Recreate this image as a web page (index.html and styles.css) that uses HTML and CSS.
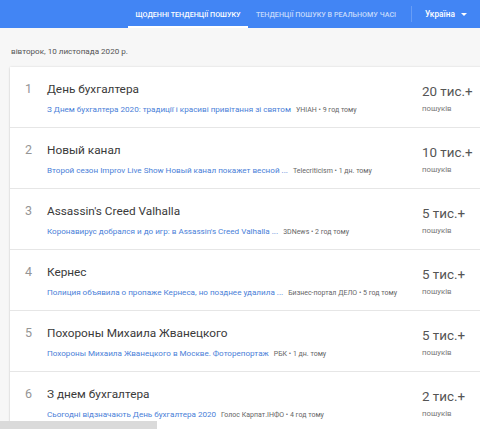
FILE: index.html
```html
<!DOCTYPE html>
<html lang="uk">
<head>
<meta charset="utf-8">
<title>Тенденції пошуку</title>
<link rel="stylesheet" href="styles.css">
</head>
<body>
<header class="topbar">
  <nav class="tabs">
    <a class="tab tab-active">ЩОДЕННІ ТЕНДЕНЦІЇ ПОШУКУ</a>
    <a class="tab">ТЕНДЕНЦІЇ ПОШУКУ В РЕАЛЬНОМУ ЧАСІ</a>
  </nav>
  <div class="divider"></div>
  <div class="geo">Україна <span class="caret"></span></div>
</header>
<main class="content">
  <div class="date">вівторок, 10 листопада 2020 р.</div>
  <section class="card">
    <div class="row">
      <div class="num">1</div>
      <div class="main">
        <div class="title">День бухгалтера</div>
        <div class="sub"><span class="link">З Днем бухгалтера 2020: традиції і красиві привітання зі святом</span><span class="src">УНІАН • 9 год тому</span></div>
      </div>
      <div class="count"><div class="value">20 тис.+</div><div class="label">пошуків</div></div>
    </div>
    <div class="row">
      <div class="num">2</div>
      <div class="main">
        <div class="title">Новый канал</div>
        <div class="sub"><span class="link">Второй сезон Improv Live Show Новый канал покажет весной ...</span><span class="src">Telecriticism • 1 дн. тому</span></div>
      </div>
      <div class="count"><div class="value">10 тис.+</div><div class="label">пошуків</div></div>
    </div>
    <div class="row">
      <div class="num">3</div>
      <div class="main">
        <div class="title">Assassin's Creed Valhalla</div>
        <div class="sub"><span class="link">Коронавирус добрался и до игр: в Assassin's Creed Valhalla ...</span><span class="src">3DNews • 2 год тому</span></div>
      </div>
      <div class="count"><div class="value">5 тис.+</div><div class="label">пошуків</div></div>
    </div>
    <div class="row">
      <div class="num">4</div>
      <div class="main">
        <div class="title">Кернес</div>
        <div class="sub"><span class="link">Полиция объявила о пропаже Кернеса, но позднее удалила ...</span><span class="src">Бизнес-портал ДЕЛО • 5 год тому</span></div>
      </div>
      <div class="count"><div class="value">5 тис.+</div><div class="label">пошуків</div></div>
    </div>
    <div class="row">
      <div class="num">5</div>
      <div class="main">
        <div class="title">Похороны Михаила Жванецкого</div>
        <div class="sub"><span class="link">Похороны Михаила Жванецкого в Москве. Фоторепортаж</span><span class="src">РБК • 1 дн. тому</span></div>
      </div>
      <div class="count"><div class="value">5 тис.+</div><div class="label">пошуків</div></div>
    </div>
    <div class="row">
      <div class="num">6</div>
      <div class="main">
        <div class="title">З днем бухгалтера</div>
        <div class="sub"><span class="link">Сьогодні відзначають День бухгалтера 2020</span><span class="src">Голос Карпат.ІНФО • 4 год тому</span></div>
      </div>
      <div class="count"><div class="value">2 тис.+</div><div class="label">пошуків</div></div>
    </div>
  </section>
</main>
<div class="scrollbar"></div>
</body>
</html>
```
FILE: styles.css
```css
html, body {
  margin: 0;
  padding: 0;
}
body {
  background: #f7f7f7;
  font-family: Roboto, "Noto Sans", "Liberation Sans", sans-serif;
  width: 480px;
  height: 429px;
  overflow: hidden;
}
.topbar {
  height: 28px;
  background: #4285f4;
  display: flex;
  align-items: stretch;
}
.tabs {
  display: flex;
  padding-left: 128px;
}
.tab {
  display: flex;
  align-items: center;
  justify-content: center;
  font-size: 7.2px;
  font-weight: 500;
  color: rgba(255, 255, 255, 0.7);
  box-sizing: border-box;
  border-bottom: 2px solid transparent;
  padding-top: 2px;
  white-space: nowrap;
}
.tab:first-child {
  width: 120px;
}
.tab:nth-child(2) {
  width: 156px;
}
.tab-active {
  color: #fff;
  border-bottom-color: #fff;
}
.divider {
  width: 1px;
  background: rgba(255, 255, 255, 0.2);
  margin: 6px 0 6px 7px;
}
.geo {
  display: flex;
  align-items: center;
  margin-left: 13px;
  color: #fff;
  font-size: 8.3px;
  font-weight: 500;
}
.caret {
  margin-left: 6px;
  width: 0;
  height: 0;
  border-left: 3px solid transparent;
  border-right: 3px solid transparent;
  border-top: 3px solid #fff;
}
.content {
  padding-left: 10px;
}
.date {
  font-size: 8.1px;
  color: #555;
  height: 39px;
  line-height: 46px;
  padding-left: 1px;
}
.card {
  background: #fff;
  box-shadow: 0 0 2px rgba(0, 0, 0, 0.12), 0 1px 2px rgba(0, 0, 0, 0.1);
  width: 490px;
}
.row {
  display: grid;
  grid-template-columns: 37px 375px 78px;
  height: 61px;
  box-sizing: border-box;
  border-bottom: 1px solid #e6e6e6;
  padding-top: 13px;
}
.num {
  text-align: right;
  padding-right: 15px;
  font-size: 12.5px;
  line-height: 18px;
  color: #959595;
}
.main {
  min-width: 0;
}
.title {
  font-size: 11.8px;
  line-height: 18px;
  color: #3a3a3a;
  white-space: nowrap;
}
.sub {
  margin-top: 3px;
  line-height: 12px;
  white-space: nowrap;
}
.link {
  font-size: 8.1px;
  color: #4a80d8;
}
.src {
  font-size: 7px;
  color: #666;
  margin-left: 5px;
}
.count {
  padding-top: 2px;
  white-space: nowrap;
}
.value {
  font-size: 13.4px;
  line-height: 20px;
  color: #555;
}
.label {
  font-size: 7.8px;
  line-height: 12px;
  color: #777;
  margin-top: 1px;
}
.scrollbar {
  position: fixed;
  left: 0;
  bottom: 0;
  width: 157px;
  height: 8px;
  background: #dadada;
}
```
